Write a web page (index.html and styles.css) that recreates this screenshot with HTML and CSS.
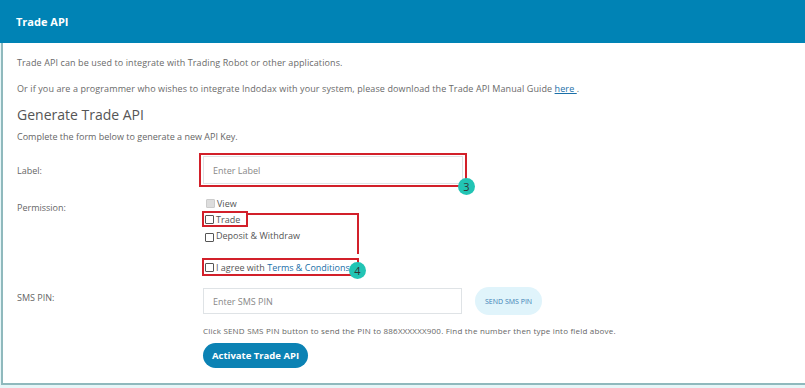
FILE: index.html
```html
<!DOCTYPE html>
<html lang="en">
<head>
  <meta charset="UTF-8" />
  <title>Trade API</title>
  <link rel="stylesheet" href="styles.css">
</head>
<body>
  <section class="panel">
    <header class="panel-head">Trade API</header>

    <div class="panel-body">
      <p class="intro">Trade API can be used to integrate with Trading Robot or other applications.</p>
      <p class="intro">Or if you are a programmer who wishes to integrate Indodax with your system, please download the Trade API Manual Guide <a href="#">here </a>.</p>

      <h2>Generate Trade API</h2>
      <p class="hint">Complete the form below to generate a new API Key.</p>

      <form class="form">
        <div class="row row-label">
          <label>Label:</label>
          <div class="field">
            <div class="mark mark-label">
              <input type="text" placeholder="Enter Label">
              <span class="badge badge-3">3</span>
            </div>
          </div>
        </div>

        <div class="row row-perm">
          <label>Permission:</label>
          <div class="field perms">
            <div class="check check-view"><span class="box box-on"></span>View</div>
            <div class="check check-trade"><span class="box"></span>Trade</div>
            <div class="check"><span class="box box-low"></span>Deposit &amp; Withdraw</div>
            <div class="check check-agree"><span class="box"></span><span>I agree with <a href="#">Terms &amp; Conditions</a></span></div>
            <span class="link-line"></span>
            <span class="badge badge-4">4</span>
          </div>
        </div>

        <div class="row row-sms">
          <label>SMS PIN:</label>
          <div class="field">
            <div class="sms">
              <input type="text" placeholder="Enter SMS PIN">
              <button type="button" class="btn-sms">SEND SMS PIN</button>
            </div>
            <p class="sms-note">Click SEND SMS PIN button to send the PIN to 886XXXXXX900. Find the number then type into field above.</p>
            <button type="button" class="btn-main">Activate Trade API</button>
          </div>
        </div>
      </form>
    </div>
  </section>
</body>
</html>
```

FILE: styles.css
```css
* { margin: 0; padding: 0; box-sizing: border-box; }
body {
  font-family: 'Open Sans', sans-serif;
  background: #e6f6f8;
  color: #666;
  font-size: 9px;
  width: 805px;
  height: 388px;
  overflow: hidden;
}
.panel {
  background: #fff;
  border-left: 2px solid #8fb9bd;
  border-bottom: 2px solid #8fb9bd;
  margin-left: 1px;
  height: 385px;
}
.panel-head {
  background: #0083b5;
  color: #fff;
  font-weight: 700;
  font-size: 11px;
  height: 43px;
  line-height: 43px;
  margin-left: -3px;
  padding-left: 16px;
}
.panel-body {
  padding: 13px 14px 0;
}
.intro {
  line-height: 13px;
  margin-bottom: 13px;
  color: #6a6a6a;
  letter-spacing: 0.1px;
}
.intro a { color: #1b6fa8; }
h2 {
  font-size: 14px;
  font-weight: 500;
  color: #555;
  margin-top: -2px;
  line-height: 18px;
}
.hint {
  margin-top: 6px;
  line-height: 13px;
}
.form { margin-top: 10px; }
.row {
  display: grid;
  grid-template-columns: 186px 1fr;
}
.row label { line-height: 13px; }
.row-label label { padding-top: 11px; }
.mark {
  position: relative;
  border: 2px solid #d2202a;
  width: 268px;
  height: 34px;
  padding: 1px 2px;
  margin-left: -4px;
}
.mark input {
  width: 100%;
  height: 100%;
  border: 1px solid #dfe3e6;
  padding-left: 9px;
  font: inherit;
  outline: none;
}
input::placeholder { color: #888; }
.badge {
  position: absolute;
  width: 17px;
  height: 17px;
  border-radius: 50%;
  background: #22c4b4;
  color: #333;
  font-size: 11px;
  line-height: 17px;
  text-align: center;
}
.badge-3 { right: -10px; bottom: -10px; }

.row-perm { margin-top: 8px; }
.row-perm label { padding-top: 6px; }
.perms {
  position: relative;
  padding-left: 2px;
  height: 92px;
}
.check {
  display: flex;
  align-items: center;
  gap: 2px;
  line-height: 13px;
  height: 16px;
  color: #555;
}
.box {
  width: 9px;
  height: 9px;
  border: 1px solid #555;
  border-radius: 1px;
  background: #fff;
}
.box-on { background: #ddd; border-color: #ccc; }
.box-low { margin-top: 5px; }
.check-view { padding-left: 1px; }
.check-trade {
  border: 2px solid #d2202a;
  width: 46px;
  margin-left: -3px;
  padding-left: 1px;
}
.check-agree {
  border: 2px solid #d2202a;
  width: 157px;
  margin-left: -3px;
  margin-top: 15px;
  height: 18px;
  padding-left: 1px;
}
.check-agree a { color: #1b6fa8; text-decoration: none; }
.link-line {
  position: absolute;
  left: 43px;
  top: 18px;
  width: 113px;
  height: 41px;
  border-top: 2px solid #d2202a;
  border-right: 2px solid #d2202a;
}
.badge-4 { left: 146px; top: 67px; }

.row-sms label { padding-top: 4px; }
.sms {
  display: flex;
  align-items: center;
  gap: 13px;
}
.sms input {
  width: 259px;
  height: 26px;
  border: 1px solid #dfe3e6;
  padding-left: 9px;
  font: inherit;
  outline: none;
}
.btn-sms {
  background: #e0f4fb;
  color: #3a7fb5;
  border: none;
  border-radius: 14px;
  font: inherit;
  font-size: 7px;
  height: 28px;
  padding: 0 10px;
}
.sms-note {
  margin-top: 10px;
  font-size: 8px;
  line-height: 12px;
  letter-spacing: 0.2px;
}
.btn-main {
  margin-top: 6px;
  background: #0b82b4;
  color: #fff;
  border: none;
  border-radius: 13px;
  font: inherit;
  font-weight: 700;
  font-size: 9.5px;
  height: 25px;
  padding: 0 9px;
}
```
